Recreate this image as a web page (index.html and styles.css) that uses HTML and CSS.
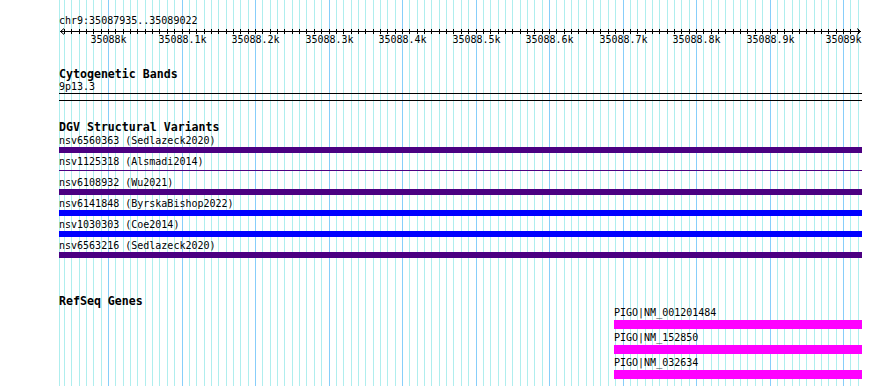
FILE: index.html
```html
<!DOCTYPE html>
<html lang="en">
<head>
    <meta charset="UTF-8">
    <title>chr9:35087935..35089022</title>
    <link rel="stylesheet" href="styles.css">
</head>
<body>
<div class="panel">
    <svg class="grid" id="grid" width="803" height="386"></svg>

    <div class="tracks">
        <div class="locus">chr9:35087935..35089022</div>
        <svg class="ruler" id="ruler" width="803" height="19"></svg>

        <section class="track cyto">
            <h2 class="track-title">Cytogenetic Bands</h2>
            <div class="label">9p13.3</div>
            <div class="band"></div>
        </section>

        <section class="track dgv">
            <h2 class="track-title">DGV Structural Variants</h2>
            <div class="variant">
                <div class="label">nsv6560363 (Sedlazeck2020)</div>
                <div class="bar both"></div>
            </div>
            <div class="variant">
                <div class="label">nsv1125318 (Alsmadi2014)</div>
                <div class="bar both thin"></div>
            </div>
            <div class="variant">
                <div class="label">nsv6108932 (Wu2021)</div>
                <div class="bar both"></div>
            </div>
            <div class="variant">
                <div class="label">nsv6141848 (ByrskaBishop2022)</div>
                <div class="bar gain"></div>
            </div>
            <div class="variant">
                <div class="label">nsv1030303 (Coe2014)</div>
                <div class="bar gain"></div>
            </div>
            <div class="variant">
                <div class="label">nsv6563216 (Sedlazeck2020)</div>
                <div class="bar both"></div>
            </div>
        </section>

        <section class="track refseq">
            <h2 class="track-title">RefSeq Genes</h2>
            <div class="gene" style="margin-left: 555px">
                <div class="label">PIGO|NM_001201484</div>
                <div class="bar"></div>
            </div>
            <div class="gene" style="margin-left: 555px">
                <div class="label">PIGO|NM_152850</div>
                <div class="bar"></div>
            </div>
            <div class="gene" style="margin-left: 555px">
                <div class="label">PIGO|NM_032634</div>
                <div class="bar"></div>
            </div>
        </section>
    </div>
</div>

<script>
// 视图范围 chr9:35087935..35089022
const ORIGIN = 49;        // 35088000 所在的列（相对面板）
const PX_PER_BP = 0.735;
const SVG_NS = "http://www.w3.org/2000/svg";

function col(pos) {
    return ORIGIN + Math.round((pos - 35088000) * PX_PER_BP);
}

function add(parent, tag, attrs, text) {
    const el = document.createElementNS(SVG_NS, tag);
    for (const k in attrs) el.setAttribute(k, attrs[k]);
    if (text) el.textContent = text;
    parent.appendChild(el);
    return el;
}

// 网格线
const grid = document.getElementById("grid");
add(grid, "rect", { x: 0, y: 0, width: 1, height: 386, class: "minor" });
for (let pos = 35087940; pos <= 35089020; pos += 10) {
    add(grid, "rect", {
        x: col(pos), y: 0, width: 1, height: 386,
        class: pos % 100 === 0 ? "major" : "minor"
    });
}

// 标尺
const ruler = document.getElementById("ruler");
add(ruler, "rect", { x: 1, y: 4, width: 801, height: 1, class: "ink" });
add(ruler, "path", { d: "M5,1.5 L1.5,4.5 L5,7.5", class: "arrow" });
add(ruler, "path", { d: "M798,1.5 L801.5,4.5 L798,7.5", class: "arrow" });
for (let pos = 35087940; pos <= 35089020; pos += 10) {
    add(ruler, "rect", { x: col(pos), y: 2, width: 1, height: 5, class: "ink" });
    if (pos % 100 === 0) {
        const kb = (pos / 1000).toFixed(1).replace(/\.0$/, "");
        add(ruler, "text", { x: col(pos) + 0.5, y: 16, class: "tick-label" }, kb + "k");
    }
}
</script>
</body>
</html>
```

FILE: styles.css
```css
body {
    margin: 0;
    background: #fff;
    color: #000;
    overflow: hidden;
    font-family: "DejaVu Sans Mono", "Liberation Mono", monospace;
    font-size: 10px;
}
.panel {
    display: grid;
    width: 803px;
    margin-left: 59px;
}
.grid, .tracks {
    grid-area: 1 / 1;
}
.grid, .ruler {
    display: block;
}
.grid .minor {
    fill: #afeeee;
}
.grid .major {
    fill: #87cefa;
}
.ruler .ink {
    fill: #000;
}
.ruler .arrow {
    fill: none;
    stroke: #000;
    stroke-width: 1;
}
.tick-label {
    font-family: "DejaVu Sans Mono", "Liberation Mono", monospace;
    font-size: 10px;
    text-anchor: middle;
}
.locus {
    margin-top: 15px;
    line-height: 12px;
}
.track-title {
    margin: 0;
    font-size: 11.6px;
    font-weight: bold;
    line-height: 13px;
}
.label {
    position: relative;
    line-height: 12px;
    white-space: nowrap;
}
.cyto {
    margin-top: 22px;
}
.band {
    height: 6px;
    border-top: 1px solid #000;
    border-bottom: 1px solid #000;
}
.dgv {
    margin-top: 20px;
}
.variant {
    padding: 1px 0 2px;
}
.bar {
    height: 6px;
}
.bar.thin {
    height: 1px;
    margin: 2px 0 3px;
}
.both {
    background-color: #4b0082;
}
.gain {
    background-color: #0000ff;
}
.refseq {
    margin-top: 35px;
}
.gene {
    margin-bottom: 4px;
}
.gene .label {
    line-height: 10px;
    padding-bottom: 2px;
}
.gene .bar {
    height: 9px;
    background-color: #ff00ff;
}
```
